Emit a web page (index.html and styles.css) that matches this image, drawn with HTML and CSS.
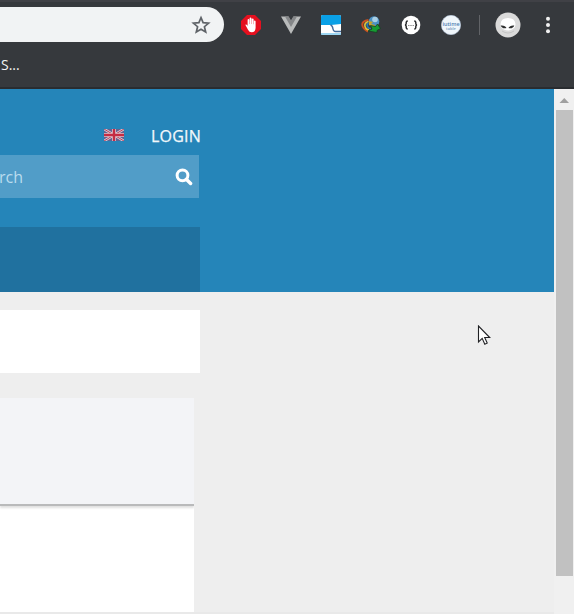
FILE: index.html
```html
<!DOCTYPE html>
<html lang="en">
<head>
<meta charset="utf-8">
<title>Browser</title>
<link rel="stylesheet" href="styles.css">
</head>
<body>
<header class="chrome">
  <div class="toolbar">
    <div class="omnibox">
      <svg class="star" width="20" height="20" viewBox="0 0 20 20"><path d="M10 2.600l2.100 5 5.500.5-4.200 3.600 1.300 5.300-4.700-2.800L5.300 17l1.300-5.300-4.200-3.600 5.500-.5z" fill="none" stroke="#5f6368" stroke-width="1.700"/></svg>
    </div>
    <div class="extensions">
      <svg width="20" height="20" viewBox="0 0 20 20"><path d="M6 0h8l6 6v8l-6 6H6l-6-6V6z" fill="#e5101f"/><path d="M4.300 9.800q.9-.8 1.700.2l.6 1V5q.1-.9.800-.9t.9.900v4h.3V3.500q.1-.9.900-.9t1 .9V9h.3V4.300q.1-.8.900-.8t.9.800v5h.3V6.300q.1-.8.800-.8t.9.800V13q-.2 4.300-4 4.300-2.300 0-3.600-2.500z" fill="#fff"/></svg>
      <svg width="20" height="20" viewBox="0 0 20 20"><path d="M0 1.500h7.500L10 6l2.500-4.500H20L10 19z" fill="#b9bbbb"/><path d="M4 1.500h3.700L10 5.500l2.300-4H16L10 12z" fill="#858789"/></svg>
      <svg width="20" height="20" viewBox="0 0 20 20"><rect width="20" height="20" rx="1.500" fill="#fff"/><path d="M1.500 0h17Q20 0 20 1.500V9L10 10H0V1.500Q0 0 1.500 0z" fill="#0aa0e6"/><path d="M9.500 10q2 .5 2.500 4 .4 2.500 2.500 2.500H20" fill="none" stroke="#426b9c" stroke-width="1.400"/><path d="M0 19h20" stroke="#7cc9ee" stroke-width="1.500"/></svg>
      <svg width="20" height="20" viewBox="0 0 20 20"><circle cx="13" cy="6.500" r="5.300" fill="#4a91c5"/><circle cx="14" cy="4.500" r="2.800" fill="#a9cee3"/><path d="M8 6l4 1-2 2 4 1-1 3-5-3z" fill="#c9a42a"/><path d="M7.500 5Q.8 6 1.300 10T7 16.500" fill="none" stroke="#c95120" stroke-width="2"/><path d="M7.500 6.500Q3 8 4 11.500t4 3.500" fill="none" stroke="#e3c23a" stroke-width="1.600"/><path d="M7.500 8q-2 1-1 3.500t3.500 2" fill="none" stroke="#287cb1" stroke-width="1.800"/><path d="M9.500 10.500l5 1 2-2.500 3 4.500-3.500 2v2l-9-1.500 4-2z" fill="#169b32" stroke="#183f24" stroke-width=".8"/></svg>
      <svg width="20" height="20" viewBox="0 0 20 20"><circle cx="10" cy="10" r="9.300" fill="#fff"/><path d="M6.800 6q-1.600 0-1.600 1.600v1Q5.200 10 3.900 10q1.300 0 1.300 1.400v1Q5.200 14 6.800 14M13.200 6q1.600 0 1.600 1.600v1q0 1.400 1.300 1.400-1.300 0-1.300 1.400v1q0 1.600-1.600 1.600" fill="none" stroke="#292b2d" stroke-width="1.500"/><path d="M7.200 10.500h1.200m1 0h1.200m1 0h1.200" stroke="#777" stroke-width="1.200"/></svg>
      <svg width="20" height="20" viewBox="0 0 20 20"><circle cx="10" cy="10" r="9.700" fill="#f0f6fb" stroke="#b8c9df" stroke-width=".6"/><text class="badge-title" x="10" y="10.500" text-anchor="middle">iutime</text><text class="badge-sub" x="10" y="15" text-anchor="middle">table</text></svg>
    </div>
    <span class="divider"></span>
    <svg class="avatar" width="26" height="26" viewBox="0 0 26 26"><circle cx="13" cy="13" r="12.500" fill="#dadada"/><path d="M5.500 12Q6 6 13 6t7.500 6q0 4-3.500 5.500-4 2-8 0-3.500-1.500-3.500-5.500z" fill="#fff"/><path d="M5.700 13.500q4.500-.5 5.800 2.600-4.500 1-5.800-2.600zM19.300 13.500q-4.500-.5-5.800 2.600 4.500 1 5.800-2.600z" fill="#303131"/><path d="M7 19q6 4 12 0" fill="none" stroke="#c4c4c4"/></svg>
    <svg class="menu" width="6" height="20" viewBox="0 0 6 20"><g fill="#f1f1f1"><circle cx="3" cy="3.700" r="2"/><circle cx="3" cy="10" r="2"/><circle cx="3" cy="16.300" r="2"/></g></svg>
  </div>
  <div class="bookmarks">S...</div>
</header>
<div class="viewport">
  <main class="page">
    <section class="hero">
      <nav class="account">
        <svg width="20" height="12" viewBox="0 0 20 12"><path fill="#65618e" d="M0 0h20v12H0z"/><path d="M0 0l20 12M20 0L0 12" stroke="#d9c7d3" stroke-width="2.600"/><path d="M0 0l20 12M20 0L0 12" stroke="#b9435b" stroke-width="1"/><path d="M10 0v12M0 6h20" stroke="#dcc5cd" stroke-width="4"/><path d="M10 0v12M0 6h20" stroke="#c52c43" stroke-width="2.400"/></svg>
        <a class="login">LOGIN</a>
      </nav>
      <div class="search"><span class="search-text">rch</span>
        <svg width="18" height="18" viewBox="0 0 18 18"><circle cx="7.500" cy="7.300" r="5.400" fill="none" stroke="#fff" stroke-width="3"/><path d="M11.300 11.200l4.300 4.300" stroke="#fff" stroke-width="3.400" stroke-linecap="round"/></svg>
      </div>
      <div class="band"></div>
    </section>
    <div class="panel"></div>
    <article class="card"><div class="card-head"></div></article>
  </main>
  <aside class="scrollbar">
    <svg width="20" height="21" viewBox="0 0 20 21"><path d="M5.500 14L10.300 9l4.700 5z" fill="#a0a0a0"/></svg>
    <div class="thumb"></div>
  </aside>
</div>
<svg class="cursor" width="14" height="21" viewBox="0 0 14 21"><path d="M1.500 1v16l3.700-3.600 2.600 5.800 2.400-1.100-2.500-5.600h5z" fill="#fff" stroke="#202124" stroke-width="1.100"/></svg>
</body>
</html>
```

FILE: styles.css
```css
* { box-sizing: border-box; }
body {
  margin: 0;
  width: 574px;
  height: 614px;
  overflow: hidden;
  position: relative;
  background: #eee;
  font-family: "Open Sans", sans-serif;
}
svg { display: block; flex: none; }
.chrome {
  height: 89px;
  background: #36393d;
  border-top: 2px solid #404146;
  border-bottom: 2px solid #292c30;
}
.toolbar {
  display: flex;
  align-items: center;
  height: 35px;
  margin-top: 5px;
}
.omnibox {
  display: flex;
  align-items: center;
  justify-content: flex-end;
  width: 224px;
  height: 35px;
  padding-right: 13px;
  background: #f1f3f4;
  border-radius: 0 18px 18px 0;
}
.extensions {
  display: flex;
  gap: 20px;
  margin-left: 17px;
}
.badge-title { font: 600 5.500px "Open Sans", sans-serif; fill: #4f7fb3; }
.badge-sub { font: 600 4px "Open Sans", sans-serif; fill: #7c9cc0; }
.divider { width: 1px; height: 20px; margin-left: 18px; background: #616367; }
.avatar { margin-left: 14.500px; }
.menu { margin-left: 24px; }
.bookmarks {
  height: 43px;
  padding-left: 1px;
  color: #f4f4f4;
  font-size: 14px;
  line-height: 45px;
}
.viewport { display: flex; height: 525px; }
.page { width: 554px; height: 525px; border-bottom: 2px solid #e9e9e9; overflow: hidden; }
.hero { height: 203px; background: #2585b9; }
.account {
  display: flex;
  align-items: center;
  justify-content: space-between;
  width: 201px;
  height: 66px;
  padding: 25px 0 0 104px;
}
.login { color: #f2f8fb; font-size: 16px; line-height: 24px; font-weight: 500; letter-spacing: .2px; margin-top: 2px; -webkit-text-stroke: .25px #f2f8fb; }
.search {
  display: flex;
  align-items: center;
  justify-content: space-between;
  width: 199px;
  height: 43px;
  padding-right: 6px;
  background: #519dc8;
}
.search-text { color: #b9dcee; font-size: 16px; margin-left: -1px; }
.band { width: 200px; height: 65px; margin-top: 29px; background: #20719f; }
.panel { width: 200px; height: 63px; margin-top: 18px; background: #fff; }
.card { width: 194px; height: 216px; margin-top: 25px; background: #fff; }
.card-head {
  height: 108px;
  background: #f3f4f7;
  border-bottom: 2px solid #b9babb;
  box-shadow: 0 2px 2px #e0e0e0;
  clip-path: inset(0 0 -6px 0);
}
.scrollbar { width: 20px; background: #f0f0f0; }
.thumb { width: 17px; height: 466px; margin-left: 2px; background: #c1c1c1; }
.cursor { position: absolute; left: 477px; top: 325px; }
```
